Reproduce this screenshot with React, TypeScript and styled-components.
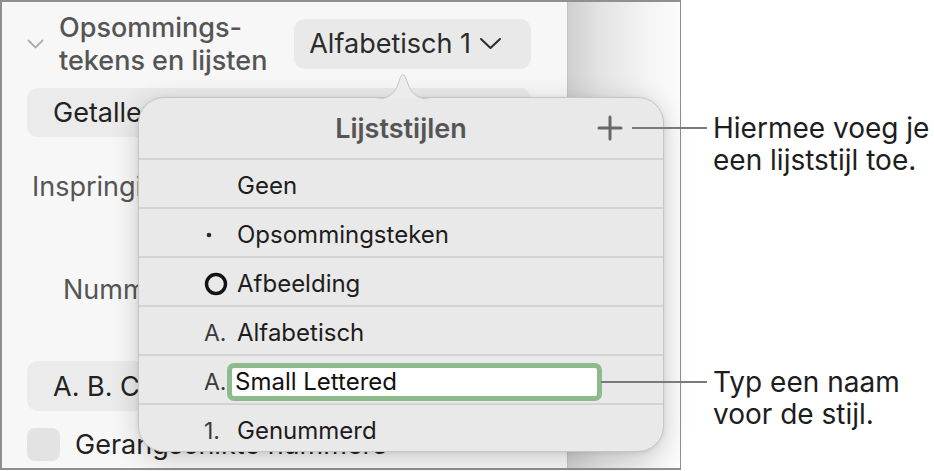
import React from "react";
import styled, { createGlobalStyle } from "styled-components";

const GlobalStyle = createGlobalStyle`
  html, body {
    margin: 0;
    background: #ffffff;
  }
  body {
    font-family: Inter, "Noto Sans", "Liberation Sans", sans-serif;
    -webkit-font-smoothing: antialiased;
  }
`;

const Page = styled.div`
  display: flex;
  width: 934px;
  height: 471px;
  overflow: hidden;
`;

const Frame = styled.div`
  position: relative;
  display: flex;
  flex-shrink: 0;
  width: 681px;
  height: 470px;
  box-sizing: border-box;
  border: 2px solid #8f8f8f;
  border-right-width: 1px;
`;

const Sidebar = styled.div`
  display: flex;
  flex-direction: column;
  width: 566px;
  box-sizing: border-box;
  padding: 8px 36px 0 25px;
  background: #f7f7f7;
  border-right: 1px solid #c3c3c3;
`;

const Canvas = styled.div`
  flex: 1;
  background: linear-gradient(90deg, #cfcfcf 0%, #e4e4e4 30%, #f4f4f4 70%, #fcfcfc 100%);
`;

const SectionHead = styled.div`
  display: flex;
  align-items: center;
  height: 67px;
`;

const Disclosure = styled.svg`
  flex-shrink: 0;
  margin-right: 15px;
`;

const SectionTitle = styled.div`
  font-size: 27px;
  font-weight: 500;
  line-height: 33px;
  color: #555555;
  white-space: nowrap;
`;

const PickerButton = styled.div`
  display: flex;
  align-items: center;
  gap: 8px;
  margin-left: auto;
  height: 50px;
  padding: 0 29px 0 15px;
  border-radius: 11px;
  background: #e9e9e9;
  font-size: 27px;
  color: #2b2b2b;
  white-space: nowrap;
`;

const WideButton = styled.div<{ $top: number; $height: number }>`
  display: flex;
  align-items: center;
  margin-top: ${(p) => p.$top}px;
  height: ${(p) => p.$height}px;
  padding-left: 26px;
  border-radius: 11px;
  background: #ebebeb;
  font-size: 27px;
  color: #222222;
  white-space: nowrap;
  overflow: hidden;
`;

const FieldLabel = styled.div<{ $top: number; $indent: number }>`
  margin-top: ${(p) => p.$top}px;
  padding-left: ${(p) => p.$indent}px;
  font-size: 27px;
  line-height: 33px;
  color: #555555;
`;

const CheckRow = styled.label`
  display: flex;
  align-items: center;
  gap: 15px;
  margin-top: 17px;
  font-size: 27px;
  color: #222222;
  white-space: nowrap;
`;

const CheckBox = styled.span`
  flex-shrink: 0;
  width: 33px;
  height: 33px;
  border-radius: 8px;
  background: #e3e3e3;
`;

const Popover = styled.div`
  position: absolute;
  left: 136px;
  top: 95px;
  width: 526px;
  height: 355px;
  box-sizing: border-box;
  background: #e9e9e9;
  border: 1px solid #c6c6c6;
  border-radius: 26px;
  box-shadow: 0 6px 28px rgba(0, 0, 0, 0.18), 0 1px 4px rgba(0, 0, 0, 0.08);
`;

const Pointer = styled.svg`
  position: absolute;
  top: -26px;
  left: 238px;
`;

const PopHead = styled.div`
  display: grid;
  grid-template-columns: 1fr auto 1fr;
  align-items: center;
  height: 60px;
`;

const PopTitle = styled.div`
  grid-column: 2;
  font-size: 27px;
  font-weight: 600;
  color: #555555;
`;

const AddButton = styled.svg`
  justify-self: end;
  margin-right: 40px;
`;

const StyleRow = styled.div`
  display: flex;
  align-items: center;
  height: 49px;
  box-sizing: border-box;
  padding: 4px 0 0 65px;
  border-top: 2px solid #d3d3d3;
`;

const Marker = styled.span`
  display: flex;
  align-items: center;
  width: 33px;
  font-size: 23px;
  color: #3a3a3a;
`;

const StyleName = styled.span`
  font-size: 24px;
  color: #1d1d1d;
`;

const NameField = styled.div`
  display: flex;
  align-items: center;
  margin-left: -10px;
  width: 375px;
  height: 38px;
  box-sizing: border-box;
  padding-left: 3px;
  border: 5px solid #8dbb8b;
  border-radius: 7px;
  background: #ffffff;
  font-size: 24px;
  color: #111111;
`;

const Notes = styled.div`
  position: relative;
  display: flex;
  flex-direction: column;
  padding-left: 32px;
`;

const Callout = styled.div<{ $top: number; $lead: number }>`
  position: relative;
  margin-top: ${(p) => p.$top}px;
  font-size: 28px;
  line-height: 32px;
  color: #1d1d1d;
  white-space: nowrap;

  &::before {
    content: "";
    position: absolute;
    left: -${(p) => p.$lead}px;
    top: 15px;
    width: ${(p) => p.$lead - 6}px;
    height: 2px;
    background: #7a7a7a;
  }
`;

const rows = [
  { marker: "", name: "Geen" },
  { marker: "bullet", name: "Opsommingsteken" },
  { marker: "ring", name: "Afbeelding" },
  { marker: "A.", name: "Alfabetisch" },
  { marker: "A.", name: "Small Lettered", editing: true },
  { marker: "1.", name: "Genummerd" },
];

function RowMarker({ kind }: { kind: string }) {
  if (kind === "bullet") {
    return (
      <Marker>
        <svg width="12" height="12" viewBox="0 0 12 12">
          <circle cx="5" cy="6" r="2.3" fill="#2a2a2a" />
        </svg>
      </Marker>
    );
  }
  if (kind === "ring") {
    return (
      <Marker>
        <svg width="26" height="26" viewBox="0 0 26 26">
          <circle cx="12" cy="13" r="9.5" fill="none" stroke="#111" strokeWidth="3.4" />
        </svg>
      </Marker>
    );
  }
  return <Marker>{kind}</Marker>;
}

export default function App() {
  return (
    <>
      <GlobalStyle />
      <Page>
        <Frame>
          <Sidebar>
            <SectionHead>
              <Disclosure width="17" height="10" viewBox="0 0 17 10">
                <path d="M1.5 1.5 L8.5 8.5 L15.5 1.5" fill="none" stroke="#adadad" strokeWidth="1.8" strokeLinecap="round" strokeLinejoin="round" />
              </Disclosure>
              <SectionTitle>
                Opsommings-
                <br />
                tekens en lijsten
              </SectionTitle>
              <PickerButton>
                Alfabetisch 1
                <svg width="23" height="13" viewBox="0 0 23 13">
                  <path d="M2 2 L11.5 11 L21 2" fill="none" stroke="#2b2b2b" strokeWidth="2" strokeLinecap="round" strokeLinejoin="round" />
                </svg>
              </PickerButton>
            </SectionHead>
            <WideButton $top={11} $height={49}>Getallen en tekst</WideButton>
            <FieldLabel $top={33} $indent={5}>Inspringing:</FieldLabel>
            <FieldLabel $top={70} $indent={36}>Nummer:</FieldLabel>
            <WideButton $top={55} $height={50}>A. B. C. D.</WideButton>
            <CheckRow>
              <CheckBox />
              Gerangschikte nummers
            </CheckRow>
          </Sidebar>
          <Canvas />

          <Popover>
            <Pointer width="52" height="27" viewBox="0 0 52 27">
              <path
                d="M0 27 C10 27 16 23 20 15 L23.5 5 Q26 0 28.5 5 L32 15 C36 23 42 27 52 27"
                fill="#ececec"
                stroke="#c6c6c6"
                strokeWidth="1"
              />
            </Pointer>
            <PopHead>
              <PopTitle>Lijststijlen</PopTitle>
              <AddButton width="26" height="26" viewBox="0 0 26 26">
                <path d="M13 2 V24 M2 13 H24" stroke="#686868" strokeWidth="3" strokeLinecap="round" />
              </AddButton>
            </PopHead>
            {rows.map((row) => (
              <StyleRow key={row.name}>
                <RowMarker kind={row.marker} />
                {row.editing ? (
                  <NameField>{row.name}</NameField>
                ) : (
                  <StyleName>{row.name}</StyleName>
                )}
              </StyleRow>
            ))}
          </Popover>
        </Frame>

        <Notes>
          <Callout $top={112} $lead={81}>
            Hiermee voeg je
            <br />
            een lijststijl toe.
          </Callout>
          <Callout $top={190} $lead={112}>
            Typ een naam
            <br />
            voor de stijl.
          </Callout>
        </Notes>
      </Page>
    </>
  );
}
